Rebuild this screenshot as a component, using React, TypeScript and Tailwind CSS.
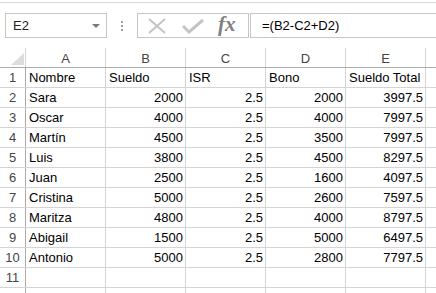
import React from "react";

const rows: [string, string, string, string, string][] = [
  ["Nombre", "Sueldo", "ISR", "Bono", "Sueldo Total"],
  ["Sara", "2000", "2.5", "2000", "3997.5"],
  ["Oscar", "4000", "2.5", "4000", "7997.5"],
  ["Martín", "4500", "2.5", "3500", "7997.5"],
  ["Luis", "3800", "2.5", "4500", "8297.5"],
  ["Juan", "2500", "2.5", "1600", "4097.5"],
  ["Cristina", "5000", "2.5", "2600", "7597.5"],
  ["Maritza", "4800", "2.5", "4000", "8797.5"],
  ["Abigail", "1500", "2.5", "5000", "6497.5"],
  ["Antonio", "5000", "2.5", "2800", "7797.5"],
  ["", "", "", "", ""],
  ["", "", "", "", ""],
];

const cols = ["A", "B", "C", "D", "E"];

export default function App() {
  return (
    <div
      className="w-[436px] h-[293px] overflow-hidden bg-white text-black"
      style={{ fontFamily: '"Liberation Sans", Arial, sans-serif' }}
    >
      <div className="h-[2px]" />
      <div className="h-px bg-[#d9d9d9]" />
      {/* formula bar */}
      <div className="mt-[10px] flex h-[25px]">
        <div className="ml-[5px] w-[102px] h-[25px] border border-[#c6c6c6] flex items-center pl-[7px] pr-[6px] text-[13px] text-[#222]">
          <span className="flex-1">E2</span>
          <svg width="8" height="4" viewBox="0 0 8 4">
            <path d="M0 0 L8 0 L4 4 Z" fill="#7a7a7a" />
          </svg>
        </div>
        <div className="w-[30px] flex flex-col items-center justify-center gap-[2px]">
          <div className="w-[2px] h-[2px] bg-[#a0a0a0]" />
          <div className="w-[2px] h-[2px] bg-[#a0a0a0]" />
          <div className="w-[2px] h-[2px] bg-[#a0a0a0]" />
        </div>
        <div className="w-[112px] h-[25px] border border-[#c6c6c6] flex items-center">
          <svg width="20" height="16" viewBox="0 0 20 16" className="ml-[9px]">
            <path d="M2 1 L18 15 M18 1 L2 15" stroke="#c4c4c4" strokeWidth="2" fill="none" />
          </svg>
          <svg width="22" height="16" viewBox="0 0 22 16" className="ml-[15px]">
            <path d="M1 8 L7 14 L21 2" stroke="#c4c4c4" strokeWidth="3" fill="none" />
          </svg>
          <span
            className="ml-[14px] text-[21px] italic font-bold leading-none text-[#808080] -mt-[2px]"
            style={{ fontFamily: '"Liberation Serif", "Times New Roman", serif' }}
          >
            fx
          </span>
        </div>
        <div className="ml-px flex-1 h-[25px] border-y border-l border-[#c6c6c6] flex items-center pl-[11px] text-[13px]">
          =(B2-C2+D2)
        </div>
      </div>
      {/* grid */}
      <div className="mt-[10px] text-[13px]">
        <div className="flex h-[20px] border-b border-[#ababab]">
          <div className="relative w-[26px] shrink-0 border-r border-[#d4d4d4]">
            <svg width="13" height="12" viewBox="0 0 13 12" className="absolute left-[11px] top-[5px]">
              <path d="M13 0 L13 12 L0 12 Z" fill="#dcdcdc" />
            </svg>
          </div>
          {cols.map((c) => (
            <div
              key={c}
              className="w-[80px] shrink-0 border-r border-[#d4d4d4] flex items-center justify-center pt-[2px] text-[#444]"
            >
              {c}
            </div>
          ))}
          <div className="flex-1" />
        </div>
        {rows.map((r, i) => (
          <div key={i} className="flex h-[20px] border-b border-[#d4d4d4]">
            <div className="w-[26px] shrink-0 border-r border-[#ababab] flex items-center justify-center text-[#444]">
              {i < 11 ? i + 1 : ""}
            </div>
            {r.map((v, j) => (
              <div
                key={j}
                className={
                  j === 0 || i === 0
                    ? "w-[80px] shrink-0 border-r border-[#d4d4d4] flex items-center pl-[3px] whitespace-nowrap"
                    : "w-[80px] shrink-0 border-r border-[#d4d4d4] flex items-center justify-end pr-[2px] whitespace-nowrap"
                }
              >
                {v}
              </div>
            ))}
            <div className="flex-1" />
          </div>
        ))}
      </div>
    </div>
  );
}
